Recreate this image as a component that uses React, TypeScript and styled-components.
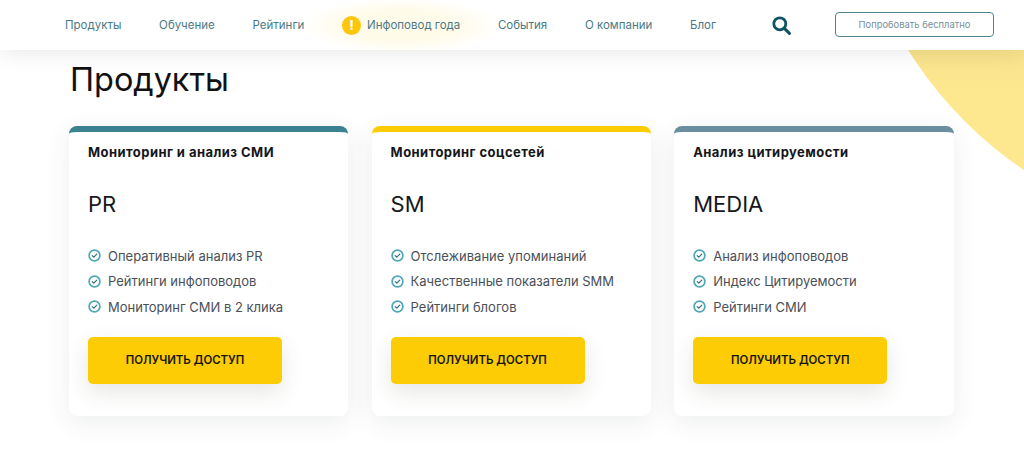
import React from "react";
import styled, { createGlobalStyle } from "styled-components";

const GlobalStyle = createGlobalStyle`
	html, body {
		margin: 0;
		padding: 0;
		background: #fff;
	}
	* {
		box-sizing: border-box;
	}
`;

const navBefore = ["Продукты", "Обучение", "Рейтинги"];
const navAfter = ["События", "О компании", "Блог"];

const products = [
	{
		title: "Мониторинг и анализ СМИ",
		code: "PR",
		color: "#3a8290",
		items: ["Оперативный анализ PR", "Рейтинги инфоповодов", "Мониторинг СМИ в 2 клика"],
	},
	{
		title: "Мониторинг соцсетей",
		code: "SM",
		color: "#fdcc04",
		items: ["Отслеживание упоминаний", "Качественные показатели SMM", "Рейтинги блогов"],
	},
	{
		title: "Анализ цитируемости",
		code: "MEDIA",
		color: "#6b8e9f",
		items: ["Анализ инфоповодов", "Индекс Цитируемости", "Рейтинги СМИ"],
	},
];

const CheckIcon = () => (
	<svg width="13" height="13" viewBox="0 0 13 13" fill="none">
		<circle cx="6.5" cy="6.5" r="5.4" stroke="#4fa8b3" strokeWidth="1.7" />
		<path d="M4.2 6.6l1.6 1.6 3-3" stroke="#2f6f7c" strokeWidth="1.2" strokeLinecap="round" strokeLinejoin="round" />
	</svg>
);

const SearchIcon = () => (
	<svg width="19" height="19" viewBox="0 0 19 19" fill="none">
		<circle cx="7.8" cy="7.8" r="6" stroke="#0f5460" strokeWidth="2.8" />
		<path d="M12.4 12.4l5 5" stroke="#0f5460" strokeWidth="3" strokeLinecap="round" />
	</svg>
);

const App = () => {
	return (
		<Page>
			<GlobalStyle />
			<YellowShape />
			<Header>
				<Nav>
					{navBefore.map((label) => (
						<NavLink key={label}>{label}</NavLink>
					))}
					<HotLink>
						<HotBadge>!</HotBadge>
						<NavLink>Инфоповод года</NavLink>
					</HotLink>
					{navAfter.map((label) => (
						<NavLink key={label}>{label}</NavLink>
					))}
				</Nav>
				<SearchButton>
					<SearchIcon />
				</SearchButton>
				<TryButton>Попробовать бесплатно</TryButton>
			</Header>
			<Main>
				<Title>Продукты</Title>
				<Cards>
					{products.map((product) => (
						<Card key={product.code} $color={product.color}>
							<CardTitle>{product.title}</CardTitle>
							<CardCode>{product.code}</CardCode>
							<Features>
								{product.items.map((item) => (
									<Feature key={item}>
										<CheckIcon />
										<span>{item}</span>
									</Feature>
								))}
							</Features>
							<AccessButton>Получить доступ</AccessButton>
						</Card>
					))}
				</Cards>
			</Main>
		</Page>
	);
};

const Page = styled.div`
	position: relative;
	width: 1024px;
	height: 466px;
	overflow: hidden;
	background: #fff;
	font-family: Inter, "Noto Sans", sans-serif;
`;

const YellowShape = styled.div`
	position: absolute;
	left: 847px;
	top: -565px;
	width: 804px;
	height: 804px;
	border-radius: 50%;
	background: linear-gradient(180deg, #f6e08c 72%, #fee88f 84%);
`;

const Header = styled.header`
	position: relative;
	z-index: 2;
	display: flex;
	align-items: center;
	height: 50px;
	padding-left: 65px;
	background: #fff;
	box-shadow: 0 0 26px rgba(0, 0, 0, 0.11);
`;

const Nav = styled.nav`
	display: flex;
	align-items: center;
	gap: 37.7px;
`;

const NavLink = styled.a`
	font-size: 11.5px;
	line-height: 16px;
	color: #4a7a86;
	white-space: nowrap;
`;

const HotLink = styled.div`
	display: flex;
	align-items: center;
	gap: 6px;
	background: radial-gradient(ellipse at center, rgba(255, 240, 170, 0.25) 40%, rgba(255, 255, 255, 0) 75%);
	margin: -25px -37px;
	padding: 17px 37px;
`;

const HotBadge = styled.span`
	display: flex;
	align-items: center;
	justify-content: center;
	width: 19px;
	height: 19px;
	border-radius: 50%;
	background: #fdc60a;
	color: #fff;
	font-size: 13px;
	font-weight: 800;
`;

const SearchButton = styled.div`
	display: flex;
	margin-left: 56px;
`;

const TryButton = styled.button`
	width: 159px;
	height: 25px;
	margin: -1px 0 0 44px;
	padding: 0;
	border: 1px solid #4d8290;
	border-radius: 4px;
	background: #fff;
	color: #77909a;
	font-family: inherit;
	font-size: 9.4px;
`;

const Main = styled.main`
	position: relative;
	z-index: 1;
	padding: 0 0 0 69px;
`;

const Title = styled.h1`
	margin: 0 0 0 1px;
	height: 76px;
	padding-top: 10px;
	font-size: 32.4px;
	line-height: 40px;
	font-weight: 400;
	color: #111;
`;

const Cards = styled.div`
	display: flex;
	gap: 23.2px;
`;

const Card = styled.article<{ $color: string }>`
	display: flex;
	flex-direction: column;
	align-items: flex-start;
	width: 279.4px;
	height: 290px;
	padding: 12px 19px 0;
	border-top: 6px solid ${(p) => p.$color};
	border-radius: 8px;
	background: #fff;
	box-shadow: 0 6px 26px rgba(40, 50, 60, 0.09);
`;

const CardTitle = styled.h3`
	margin: 0;
	font-size: 13px;
	line-height: 17px;
	letter-spacing: 0.45px;
	font-weight: 700;
	color: #14161a;
	white-space: nowrap;
`;

const CardCode = styled.div`
	margin-top: 30px;
	font-size: 22px;
	line-height: 26px;
	font-weight: 400;
	color: #16181c;
`;

const Features = styled.ul`
	display: flex;
	flex-direction: column;
	gap: 8px;
	margin: 30px 0 0;
	padding: 0;
	list-style: none;
`;

const Feature = styled.li`
	display: flex;
	align-items: center;
	gap: 7px;
	height: 17.5px;
	font-size: 13px;
	color: #4a5057;
	white-space: nowrap;
`;

const AccessButton = styled.button`
	width: 194px;
	height: 47px;
	margin-top: 21px;
	padding: 0;
	border: none;
	border-radius: 5px;
	background: #fdcc04;
	box-shadow: 0 8px 22px rgba(60, 60, 40, 0.13);
	color: #15150f;
	font-family: inherit;
	font-size: 11.4px;
	font-weight: 600;
	text-transform: uppercase;
`;

export default App;
